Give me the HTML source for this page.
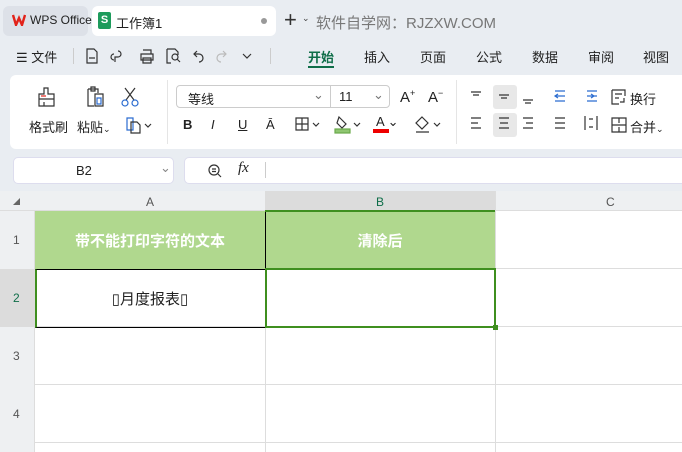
<!DOCTYPE html><html><head><meta charset="utf-8"><style>
*{box-sizing:border-box;margin:0;padding:0}
body{width:682px;height:452px;overflow:hidden;background:#e9edf2;font-family:"Liberation Sans","Noto Sans CJK SC",sans-serif;position:relative;color:#222}
.a{position:absolute}
.t{font-size:13px;white-space:nowrap}
svg{position:absolute;fill:none;stroke:#333;stroke-width:1.2}
</style></head><body>
<div class="a" style="left:3px;top:6px;width:85px;height:30px;background:#dde1e8;border-radius:6px"></div>
<svg style="left:12px;top:14px" width="14" height="12" viewBox="0 0 14 12"><path d="M1 1 L4 11 L7 4 L10 11 L13 1" stroke="#e2231a" stroke-width="2.4"/></svg>
<div class="a t" style="left:30px;top:13px;color:#222;font-size:12px">WPS Office</div>
<div class="a" style="left:92px;top:6px;width:184px;height:30px;background:#fff;border-radius:6px"></div>
<div class="a" style="left:98px;top:12px;width:13px;height:17px;background:#1d9b5c;border-radius:2px;color:#fff;font-size:11px;font-weight:bold;text-align:center;line-height:17px">S</div>
<div class="a t" style="left:116px;top:13px">工作簿1</div>
<div class="a" style="left:261px;top:18px;width:6px;height:6px;border-radius:3px;background:#999"></div>
<div class="a t" style="left:284px;top:7px;font-size:22px;color:#333">+</div>
<div class="a t" style="left:302px;top:13px;font-size:9px;color:#444">⌄</div>
<div class="a t" style="left:316px;top:12px;font-size:15px;color:#777">软件自学网：RJZXW.COM</div>

<div class="a t" style="left:16px;top:47px">☰ 文件</div>
<div class="a" style="left:73px;top:48px;width:1px;height:16px;background:#ccc"></div>
<svg style="left:84px;top:47px" width="180" height="18" viewBox="0 0 180 18">
<path d="M3 2h7l3 3v11H3z M5 11h6"/>
<path d="M34 4a3 3 0 1 1 0 6h-3v5 M30 7a3 3 0 1 0 0 6"/>
<path d="M57 3h8v4 M55 7h12v6H55z M57 11h8v5h-8z" transform="translate(2,0)"/>
<path d="M80 2h8l3 3v3 M80 2v14h4 M88 10m-3 0a3 3 0 1 0 6 0a3 3 0 1 0-6 0 M90 12l3 3" transform="translate(3,0)"/>
<path d="M111 4l-3 3 3 3 M108 7h5a4 4 0 0 1 0 8" transform="translate(2,0)"/>
<path d="M138 4l3 3-3 3 M141 7h-5a4 4 0 0 0 0 8" stroke="#bbb" transform="translate(1,0)"/>
<path d="M159 7l4 4 4-4"/>
</svg>
<div class="a" style="left:270px;top:48px;width:1px;height:16px;background:#ccc"></div>
<div class="a t" style="left:308px;top:47px;color:#0f6e49;font-weight:bold">开始</div>
<div class="a" style="left:308px;top:66px;width:26px;height:2px;background:#0f6e49"></div>
<div class="a t" style="left:364px;top:47px">插入</div>
<div class="a t" style="left:420px;top:47px">页面</div>
<div class="a t" style="left:476px;top:47px">公式</div>
<div class="a t" style="left:532px;top:47px">数据</div>
<div class="a t" style="left:588px;top:47px">审阅</div>
<div class="a t" style="left:643px;top:47px">视图</div>

<div class="a" style="left:10px;top:75px;width:680px;height:74px;background:#fff;border-radius:6px"></div>
<svg style="left:36px;top:86px" width="22" height="22" viewBox="0 0 22 22"><path d="M8 2h4v6h6v5H3V8h5z M3 13v7h15v-7 M8 16v4" /><path d="M5 10h5" stroke="#e2231a"/></svg>
<svg style="left:84px;top:86px" width="22" height="22" viewBox="0 0 22 22"><path d="M4 3h10v4 M4 3v17h6 M7 1h4v4H7z M11 8h8v12h-8z"/><path d="M13 12h4v6h-4z" stroke="#2b6cd0"/></svg>
<svg style="left:120px;top:86px" width="20" height="22" viewBox="0 0 20 22"><path d="M5 2l9 12 M15 2L6 14"/><circle cx="5" cy="17" r="3" stroke="#2b6cd0"/><circle cx="15" cy="17" r="3" stroke="#2b6cd0"/></svg>
<div class="a t" style="left:29px;top:117px">格式刷</div>
<div class="a t" style="left:77px;top:117px">粘贴<span style="font-size:9px">⌄</span></div>
<svg style="left:125px;top:116px" width="30" height="18" viewBox="0 0 30 18"><path d="M2 2h6v12H2z" stroke="#2b6cd0"/><path d="M6 6h6l3 3v8H6z"/><path d="M20 8l3 3 3-3"/></svg>
<div class="a" style="left:167px;top:80px;width:1px;height:64px;background:#e5e5e5"></div>
<div class="a" style="left:176px;top:85px;width:214px;height:23px;border:1px solid #ccc;border-radius:4px"></div>
<div class="a" style="left:330px;top:85px;width:1px;height:23px;background:#ccc"></div>
<div class="a t" style="left:188px;top:89px">等线</div>
<div class="a t" style="left:313px;top:87px;color:#777">⌄</div>
<div class="a t" style="left:339px;top:89px">11</div>
<div class="a t" style="left:373px;top:87px;color:#777">⌄</div>
<div class="a t" style="left:400px;top:88px;font-size:15px">A<sup style="font-size:9px">+</sup></div>
<div class="a t" style="left:428px;top:88px;font-size:15px">A<sup style="font-size:9px">−</sup></div>
<div class="a t" style="left:183px;top:117px;font-weight:bold">B</div>
<div class="a t" style="left:211px;top:117px;font-style:italic">I</div>
<div class="a t" style="left:238px;top:117px;text-decoration:underline">U</div>
<div class="a t" style="left:266px;top:117px">Ā</div>
<svg style="left:295px;top:117px" width="30" height="16" viewBox="0 0 30 16"><path d="M1 1h12v12H1z M7 1v12 M1 7h12 M18 6l3 3 3-3"/></svg>
<svg style="left:334px;top:115px" width="30" height="20" viewBox="0 0 30 20"><path d="M5 2l7 7-4 4-5-5z M20 8l3 3 3-3"/><rect x="1" y="14" width="15" height="4" fill="#8fc671" stroke="#6aa94a"/></svg>
<div class="a t" style="left:376px;top:114px">A ⌄</div>
<div class="a" style="left:373px;top:129px;width:16px;height:4px;background:#e00;"></div>
<svg style="left:414px;top:116px" width="30" height="18" viewBox="0 0 30 18"><path d="M8 1l6 6-6 6-6-6z M5 10l3 3 M2 16h13 M20 7l3 3 3-3"/></svg>
<div class="a" style="left:456px;top:80px;width:1px;height:64px;background:#e5e5e5"></div>
<div class="a" style="left:493px;top:85px;width:24px;height:24px;background:#e8e8e8;border-radius:3px"></div>
<div class="a" style="left:493px;top:113px;width:24px;height:24px;background:#e8e8e8;border-radius:3px"></div>
<svg style="left:468px;top:88px" width="140" height="48" viewBox="0 0 140 48">
<path d="M3 4h10 M5 7h6"/>
<path d="M31 7h10 M33 10h6"/>
<path d="M55 12h10 M57 15h6"/>
<path d="M87 3h10 M87 8h10 M87 13h10 M90 6l-3 2 3 2" stroke="#2b6cd0"/>
<path d="M119 3h10 M119 8h10 M119 13h10 M123 6l3 2-3 2" stroke="#2b6cd0"/>
<path d="M3 30h10 M3 35h7 M3 40h10"/>
<path d="M31 30h10 M32 35h8 M31 40h10"/>
<path d="M55 30h10 M58 35h7 M55 40h10"/>
<path d="M87 30h10 M87 35h10 M87 40h10"/>
<path d="M117 28v14 M129 28v14 M121 31h4 M121 39h4" />
</svg>
<svg style="left:610px;top:88px" width="18" height="18" viewBox="0 0 18 18"><path d="M2 2h13v6 M2 2v14h7 M5 6h7 M5 10h4 M14 10v4h-4"/></svg>
<div class="a t" style="left:630px;top:89px">换行</div>
<svg style="left:610px;top:116px" width="18" height="18" viewBox="0 0 18 18"><path d="M2 2h14v14H2z M2 9h14 M9 2v5 M9 11v5"/></svg>
<div class="a t" style="left:630px;top:117px">合并<span style="font-size:9px">⌄</span></div>

<div class="a" style="left:13px;top:157px;width:161px;height:27px;background:#fff;border:1px solid #dde;border-radius:5px"></div>
<div class="a t" style="left:76px;top:163px">B2</div>
<div class="a t" style="left:160px;top:160px;color:#888">⌄</div>
<div class="a" style="left:184px;top:157px;width:510px;height:27px;background:#fff;border:1px solid #dde;border-radius:5px"></div>
<svg style="left:207px;top:163px" width="16" height="16" viewBox="0 0 16 16"><circle cx="7" cy="7" r="5"/><path d="M5 6h4 M5 8.5h4 M11 11l3 3"/></svg>
<div class="a t" style="left:238px;top:160px;font-family:'Liberation Serif',serif;font-style:italic;font-size:15px">fx</div>
<div class="a" style="left:265px;top:162px;width:1px;height:16px;background:#ccc"></div>

<div class="a" style="left:0;top:191px;width:682px;height:261px;background:#fff"></div>
<div class="a" style="left:0;top:191px;width:682px;height:20px;background:#eef0f2;border-bottom:1px solid #ddd"></div>
<div class="a" style="left:265px;top:191px;width:230px;height:20px;background:#dcdcdc"></div>
<div class="a" style="left:0;top:211px;width:35px;height:241px;background:#eef0f2;border-right:1px solid #ddd"></div>
<div class="a" style="left:0;top:269px;width:35px;height:58px;background:#dcdcdc"></div>
<div class="a t" style="left:13px;top:197px;font-size:7px;color:#666">◢</div>
<div class="a t" style="left:146px;top:195px;font-size:12px;color:#555">A</div>
<div class="a t" style="left:376px;top:195px;font-size:12px;color:#0f6e49">B</div>
<div class="a t" style="left:606px;top:195px;font-size:12px;color:#555">C</div>
<div class="a t" style="left:13px;top:233px;font-size:12px;color:#555">1</div>
<div class="a t" style="left:13px;top:291px;font-size:12px;color:#0f6e49">2</div>
<div class="a t" style="left:13px;top:349px;font-size:12px;color:#555">3</div>
<div class="a t" style="left:13px;top:407px;font-size:12px;color:#555">4</div>
<div class="a" style="left:35px;top:268px;width:647px;height:1px;background:#ddd"></div>
<div class="a" style="left:35px;top:326px;width:647px;height:1px;background:#ddd"></div>
<div class="a" style="left:35px;top:384px;width:647px;height:1px;background:#ddd"></div>
<div class="a" style="left:35px;top:442px;width:647px;height:1px;background:#ddd"></div>
<div class="a" style="left:265px;top:211px;width:1px;height:241px;background:#ddd"></div>
<div class="a" style="left:495px;top:191px;width:1px;height:261px;background:#ddd"></div>
<div class="a" style="left:35px;top:211px;width:460px;height:58px;background:#b0d88e"></div>
<div class="a" style="left:265px;top:211px;width:1px;height:58px;background:#000"></div>
<div class="a" style="left:265px;top:210px;width:230px;height:2px;background:#3f8f1f"></div>
<div class="a t" style="left:35px;top:230px;width:230px;text-align:center;color:#fff;font-weight:bold;font-size:15px">带不能打印字符的文本</div>
<div class="a t" style="left:265px;top:230px;width:230px;text-align:center;color:#fff;font-weight:bold;font-size:15px">清除后</div>
<div class="a" style="left:35px;top:269px;width:231px;height:59px;border:1px solid #000;border-left:2px solid #3f8f1f"></div>
<div class="a t" style="left:35px;top:288px;width:230px;text-align:center;font-size:15px">▯月度报表▯</div>
<div class="a" style="left:265px;top:268px;width:231px;height:60px;border:2px solid #3f8f1f"></div>
<div class="a" style="left:493px;top:325px;width:5px;height:5px;background:#3f8f1f"></div>
</body></html>
